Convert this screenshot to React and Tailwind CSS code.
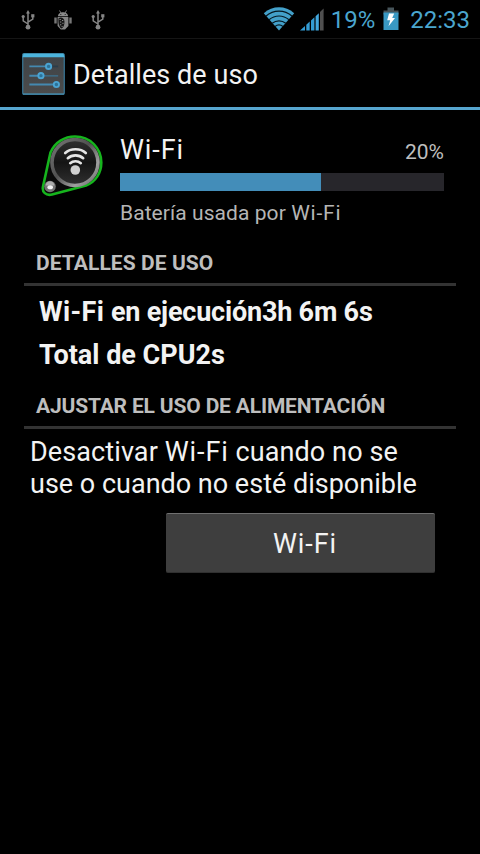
import React from 'react';

const UsbIcon = () => (
  <svg width="14" height="20" viewBox="0 0 14 20" fill="none" stroke="#858585" strokeWidth="1.5">
    <path d="M7 3V16M7 14L2.2 10.8V7.5M7 12.2L11.8 9.2V6" />
    <path d="M7 0L9 3.6H5Z" fill="#858585" stroke="none" />
    <circle cx="7" cy="17.2" r="2.4" fill="#858585" stroke="none" />
    <circle cx="2.2" cy="6.6" r="1.6" fill="#858585" stroke="none" />
    <path d="M10.2 4.2h3.2v3.2h-3.2z" fill="#858585" stroke="none" />
  </svg>
);

const DebugIcon = () => (
  <svg width="18" height="20" viewBox="0 0 18 20">
    <path d="M5.5 0.5L7 3M12.5 0.5L11 3" stroke="#8a8a8a" strokeWidth="0.9" />
    <path d="M4 6.3C4 0.9 14 0.9 14 6.3Z" fill="#8a8a8a" />
    <path d="M0.3 7.6h2.4v6H0.3zM15.3 7.6h2.4v6h-2.4z" fill="#777" />
    <path d="M3.6 7h10.8v9l-3.4 3.5H6.8L3.6 16z" fill="#858585" />
    <path d="M4.6 8.2C7 6.5 10 7.7 10.4 11C10.7 14.5 9.6 18 7.4 18.4C5 17.5 4 12 4.6 8.2Z" fill="#151515" />
    <path d="M5.5 9.5h1.3M8 10.5h1.3M6 12h1.3M8.3 13.3h1.3M6 14.8h1.3M7.6 16.5h1" stroke="#8a8a8a" />
    <circle cx="6.8" cy="4.5" r="0.6" fill="#111" />
    <circle cx="11.2" cy="4.5" r="0.6" fill="#111" />
  </svg>
);

const WifiIcon = () => (
  <svg width="32" height="24" viewBox="0 0 32 24">
    <path d="M0.8 6.2C9.5 -1.6 22.5 -1.6 31.2 6.2L16 23.5Z" fill="#43a0c9" />
    <path d="M2.8 9.2C10.5 2.5 21.5 2.5 29.2 9.2M6 12.8C12 7.7 20 7.7 26 12.8M9.2 16.3C13.2 13 18.8 13 22.8 16.3M12 19.5C14.3 17.7 17.7 17.7 20 19.5" fill="none" stroke="#061720" strokeWidth="1.2" />
  </svg>
);

const SignalIcon = () => (
  <svg width="24" height="23" viewBox="0 0 24 23">
    <path d="M0 22.5L5 18V22.5ZM6.3 16.7L9.7 13.6V22.5H6.3ZM11 12.4L14.4 9.3V22.5H11Z" fill="#339bd3" />
    <path d="M15.6 8.2L18.8 5.2V22.5H15.6Z" fill="#43a8df" />
    <path d="M20 4L23.6 0.5V22.5H20Z" fill="#505050" />
  </svg>
);

const BatteryIcon = () => (
  <svg width="16" height="24" viewBox="0 0 16 24">
    <path d="M4.5 0.5h6.5v3h4.5v4H0.5v-4h4z" fill="#47555b" />
    <path d="M0.5 5.5h15V23H0.5z" fill="#3999c4" />
    <path d="M6 6.5H11.2L9.2 11H12L5.5 19.3L7.2 13.2H4.2Z" fill="#fff" />
  </svg>
);

const SettingsIcon = () => (
  <svg width="43" height="42" viewBox="0 0 44 43">
    <defs>
      <linearGradient id="panel" x1="0" y1="0" x2="0" y2="1">
        <stop offset="0" stopColor="#3e4347" />
        <stop offset="1" stopColor="#4b4b4b" />
      </linearGradient>
    </defs>
    <rect x="0.75" y="0.75" width="42.5" height="41.5" rx="1" fill="url(#panel)" stroke="#397b9c" strokeWidth="1.2" />
    <path d="M1.5 0.5h41l1 3.8H0.5z" fill="#4cb4dc" />
    <path d="M1 42h42" stroke="#4b9bbf" />
    <path d="M7.5 13.7h20M7.5 23.2h12M7.5 32.2h27" stroke="#4489b0" strokeWidth="2" />
    <path d="M30 13.7h7" stroke="#2b3d49" strokeWidth="1.8" />
    <path d="M22 23.4h15" stroke="#3d6d88" strokeWidth="1.5" />
    <g fill="#2d7297" stroke="#4ba4d2" strokeWidth="1.9">
      <circle cx="27.2" cy="13.7" r="2.7" />
      <circle cx="19.4" cy="23.2" r="2.7" />
      <circle cx="35.2" cy="32.2" r="2.7" />
    </g>
  </svg>
);

const WifiBadge = () => (
  <svg width="62" height="62" viewBox="0 0 62 62">
    <defs>
      <linearGradient id="ring" x1="0" y1="0" x2="1" y2="1">
        <stop offset="0" stopColor="#777" />
        <stop offset="0.45" stopColor="#505050" />
        <stop offset="0.75" stopColor="#a0a0a0" />
        <stop offset="1" stopColor="#606060" />
      </linearGradient>
      <linearGradient id="disc" x1="0" y1="0" x2="0" y2="1">
        <stop offset="0" stopColor="#303030" />
        <stop offset="0.5" stopColor="#151515" />
        <stop offset="1" stopColor="#303030" />
      </linearGradient>
    </defs>
    <path d="M9.5 17.5C14 7 23.5 1.5 34 1.5C49 1.5 60.3 13 60.3 27.5C60.3 38 54.5 47 45 50.5L11 59.5C5 61 0.8 57 2 51.5Z" fill="#090909" stroke="#16b41d" strokeWidth="2.6" />
    <circle cx="34" cy="27.5" r="23" fill="url(#disc)" stroke="url(#ring)" strokeWidth="3.6" />
    <g fill="none" stroke="#e6e6e6" strokeLinecap="round" strokeWidth="2.6">
      <path d="M24.2 18C29.5 13 39.5 13 44.8 18" />
      <path d="M26.8 23.2C31 19.4 38 19.4 42.2 23.2" />
      <path d="M29.2 28.2C32 25.6 37 25.6 39.8 28.2" />
    </g>
    <circle cx="34.3" cy="35" r="4.8" fill="#d0d0d0" />
    <circle cx="9" cy="51.5" r="5.8" fill="#737373" />
    <path d="M4.5 50.5C5 44.8 13 44.8 13.5 50.5Z" fill="#aaa" />
    <ellipse cx="9.2" cy="52.2" rx="2.8" ry="2" fill="#f1f1f1" />
  </svg>
);

const SectionHeader = ({ title, className }) => (
  <h2 className={`mx-6 border-b-3 border-[#333] px-3 pb-2 text-[21px] leading-6 font-bold text-[#bebebe] ${className}`}>
    {title}
  </h2>
);

const usage = {
  name: 'Wi-Fi',
  percent: 20,
  fill: 62,
};

const App = () => {
  return (
    <div className="min-h-screen w-full bg-black font-[Roboto,sans-serif] text-[27px] leading-8 text-[#f3f3f3]">
      <div className="flex h-[38px] items-center pt-0.5 pr-[10px] pl-[21px] text-2xl text-[#4ba6cf]">
        <div className="flex items-center gap-[19px]">
          <UsbIcon />
          <DebugIcon />
          <UsbIcon />
        </div>
        <div className="ml-auto flex items-center">
          <span className="-mt-0.5"><WifiIcon /></span>
          <span className="-mt-0.5 ml-[5px]"><SignalIcon /></span>
          <span className="ml-[7px]">19%</span>
          <span className="-mt-0.5 mr-[11px] ml-2"><BatteryIcon /></span>
          <span>22:33</span>
        </div>
      </div>

      <header className="flex h-[72px] items-center gap-2 border-t border-b-3 border-t-[#151515] border-b-[#57a6cf] pt-0.5 pl-[22px]">
        <SettingsIcon />
        <h1 className="pt-0.5 tracking-[0.05px]">Detalles de uso</h1>
      </header>

      <section className="flex gap-[17px] pt-6 pr-9 pl-[41px]">
        <div className="w-[62px] pt-px">
          <WifiBadge />
        </div>
        <div className="flex-1">
          <div className="flex items-end justify-between">
            <span className="tracking-[0.9px]">{usage.name}</span>
            <span className="text-[21px] leading-7 text-[#bebebe]">{usage.percent}%</span>
          </div>
          <div className="mt-[7px] h-[18px] bg-[#27262b]">
            <div className="h-full bg-[#438db9]" style={{ width: `${usage.fill}%` }} />
          </div>
          <p className="mt-2.5 text-[21px] leading-6 tracking-[0.07px] text-[#b5b5b5]">
            Batería usada por <span className="tracking-[0.8px]">Wi-Fi</span>
          </p>
        </div>
      </section>

      <SectionHeader title="DETALLES DE USO" className="mt-[26px] tracking-[0.07px]" />
      <div className="mt-2.5 flex flex-col gap-[11px] pl-[39px] font-bold">
        <div className="tracking-[-0.2px]">
          <span className="tracking-[0.4px]">Wi-Fi</span> en ejecución3h 6m 6s
        </div>
        <div>Total de CPU2s</div>
      </div>

      <SectionHeader title="AJUSTAR EL USO DE ALIMENTACIÓN" className="mt-[23px] tracking-[-0.17px]" />
      <div className="mt-[7px] pl-[30px]">
        <p className="tracking-[0.1px]">
          Desactivar <span className="tracking-[0.9px]">Wi-Fi</span> cuando no se
        </p>
        <p>use o cuando no esté disponible</p>
      </div>
      <button className="mt-[13px] ml-[166px] block h-[60px] w-[269px] rounded-xs border-t border-b border-t-[#707070] border-b-[#303030] bg-[#3e3e3e] pt-0.5 pl-[9px] tracking-[0.9px]">
        Wi-Fi
      </button>
    </div>
  );
};

export default App;
